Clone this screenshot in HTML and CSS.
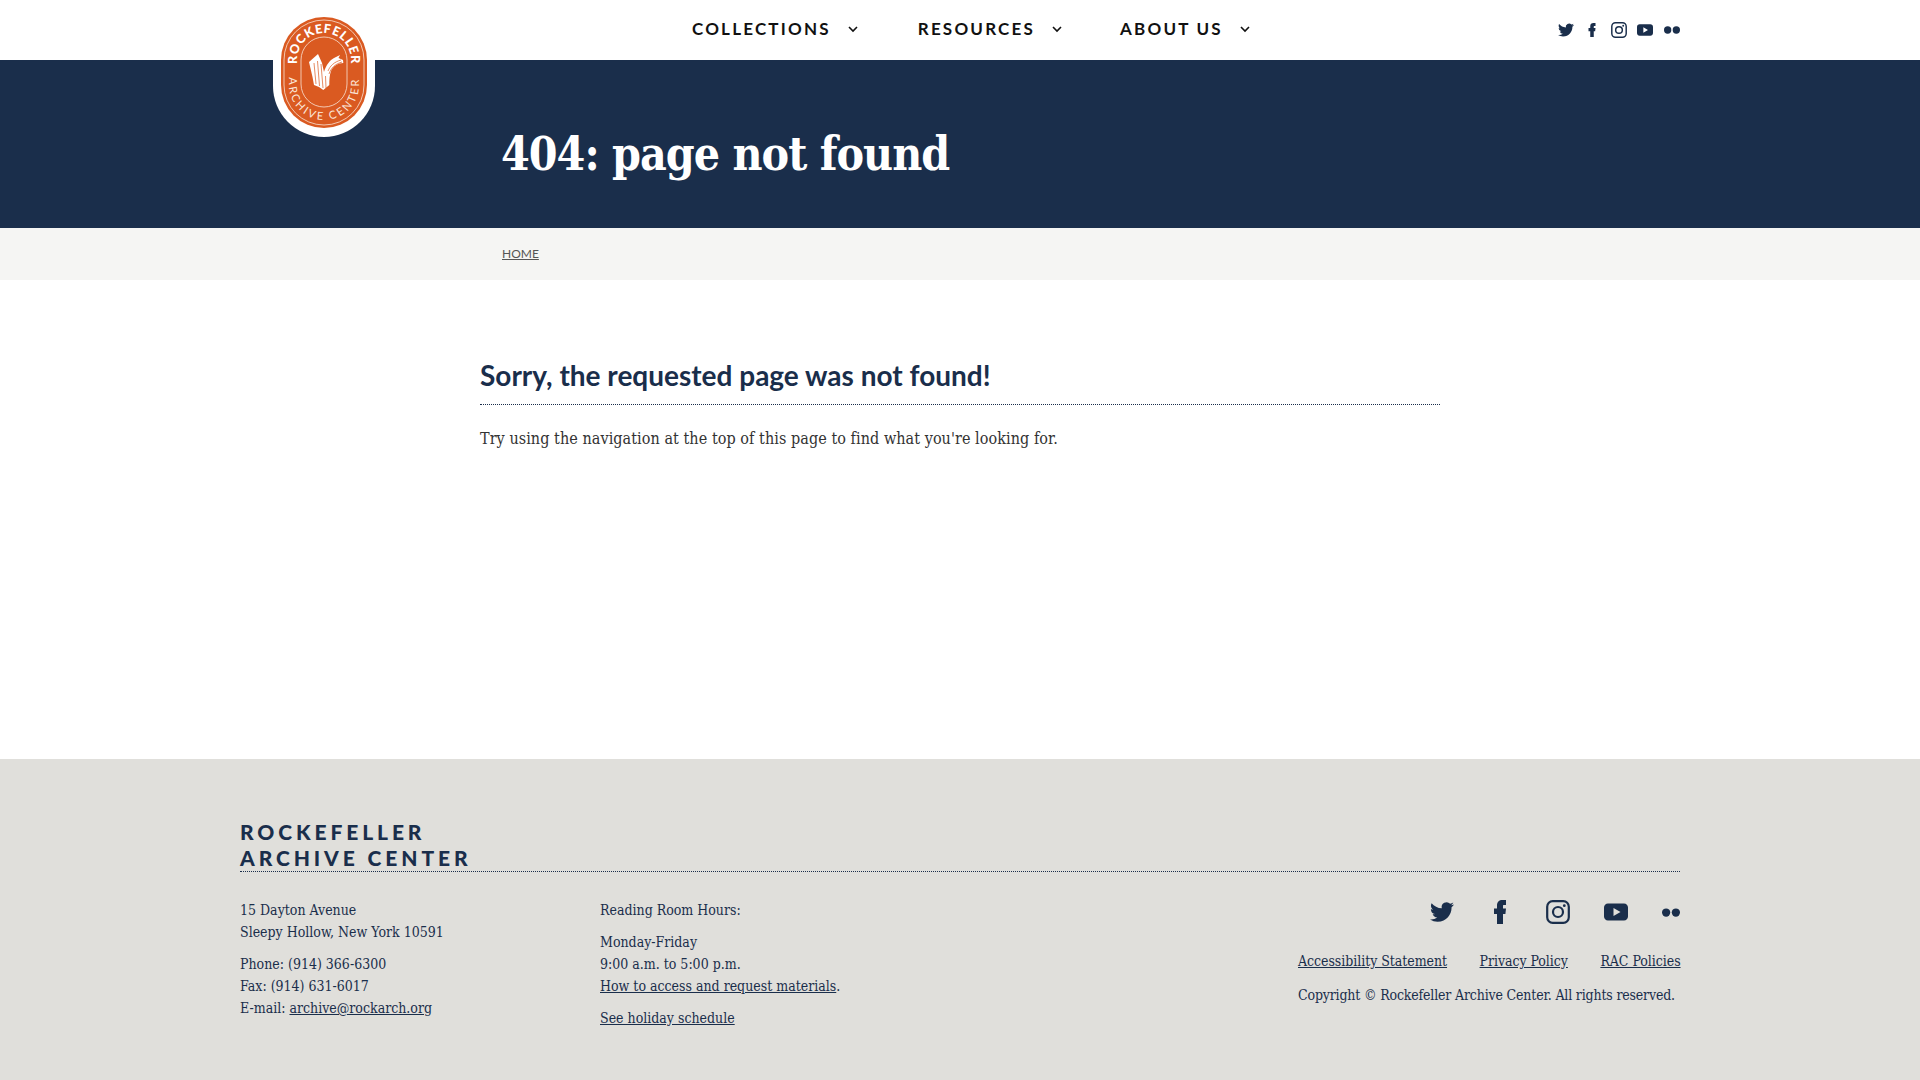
FILE: index.html
```html
<!DOCTYPE html>
<html lang="en">
  <head>
    <meta charset="UTF-8" />
    <meta name="viewport" content="width=device-width, initial-scale=1.0" />
    <title>404: page not found - Rockefeller Archive Center</title>
    <link rel="stylesheet" href="styles.css">
  </head>

  <body>
    <svg class="sprite" aria-hidden="true">
      <symbol id="i-twitter" viewBox="0 0 24 24">
        <path d="M23.953 4.57a10 10 0 01-2.825.775 4.958 4.958 0 002.163-2.723c-.951.555-2.005.959-3.127 1.184a4.92 4.92 0 00-8.384 4.482C7.69 8.095 4.067 6.13 1.64 3.162a4.822 4.822 0 00-.666 2.475c0 1.71.87 3.213 2.188 4.096a4.904 4.904 0 01-2.228-.616v.06a4.923 4.923 0 003.946 4.827 4.996 4.996 0 01-2.212.085 4.936 4.936 0 004.604 3.417 9.867 9.867 0 01-6.102 2.105c-.39 0-.779-.023-1.17-.067a13.995 13.995 0 007.557 2.209c9.053 0 13.998-7.496 13.998-13.985 0-.21 0-.42-.015-.63A9.935 9.935 0 0024 4.59z"/>
      </symbol>
      <symbol id="i-facebook" viewBox="0 0 24 24">
        <path d="M9 24V14H6V8.5H9V5.5C9 2 11 0 14.5 0H18V5H15.8C15 5 15 5.5 15 6.5V8.5H18L17.4 14H15V24Z"/>
      </symbol>
      <symbol id="i-instagram" viewBox="0 0 24 24">
        <rect x="1.2" y="1.2" width="21.6" height="21.6" rx="5.5" fill="none" stroke="currentColor" stroke-width="2.2"/>
        <circle cx="12" cy="12" r="5" fill="none" stroke="currentColor" stroke-width="2.2"/>
        <circle cx="18.3" cy="5.7" r="1.4"/>
      </symbol>
      <symbol id="i-youtube" viewBox="0 0 24 18">
        <path fill-rule="evenodd" d="M4 .5h16c2.3 0 4 1.7 4 4v9c0 2.3-1.7 4-4 4H4c-2.3 0-4-1.7-4-4v-9c0-2.3 1.7-4 4-4zM9.5 5v8l7-4z"/>
      </symbol>
      <symbol id="i-flickr" viewBox="0 0 24 11">
        <circle cx="5.5" cy="5.5" r="5.5"/>
        <circle cx="18.5" cy="5.5" r="5.5"/>
      </symbol>
    </svg>

    <header class="site-header">
      <div class="container header-inner">
        <a class="logo" href="#" aria-label="Rockefeller Archive Center">
          <svg viewBox="0 0 86 111" width="86" height="111">
            <defs>
              <path id="arc-top" d="M16 70V43A27 27 0 0 1 70 43V70"/>
              <path id="arc-bottom" d="M8 50V68A35 35 0 0 0 78 68V50"/>
            </defs>
            <rect width="86" height="111" rx="43" fill="#da5a21"/>
            <rect x="3" y="3" width="80" height="105" rx="40" fill="none" stroke="#f9e3d6" stroke-width="0.8"/>
            <rect x="20" y="20" width="46" height="70" rx="23" fill="none" stroke="#f9e3d6" stroke-width="0.8"/>
            <text class="logo-top"><textPath href="#arc-top" startOffset="50%" text-anchor="middle">ROCKEFELLER</textPath></text>
            <text class="logo-bottom"><textPath href="#arc-bottom" startOffset="50%" text-anchor="middle">ARCHIVE CENTER</textPath></text>
            <path d="M28 45L37 37L41 46L43 55C45 48 49 43 53 41L59 38L57.5 41L62 43L62.3 46C57 46 52 49 50 54C48.5 58 48.3 63 48.3 68L42.3 73L38 70L33 68L31.5 60Z" fill="#fff"/>
            <path d="M33 46L35 67M36.5 44L38.5 69M40 47L42 71M44.5 59L45 71M47 54C49 49 53 45 60 43M48 57C50 51 54 47 61 45" stroke="#da5a21" stroke-width="0.7" fill="none"/>
          </svg>
        </a>

        <nav class="main-nav">
          <a class="nav-item" href="#">COLLECTIONS<svg class="chev" viewBox="0 0 10 7"><path d="M1 1l4 4 4-4"/></svg></a>
          <a class="nav-item" href="#">RESOURCES<svg class="chev" viewBox="0 0 10 7"><path d="M1 1l4 4 4-4"/></svg></a>
          <a class="nav-item" href="#">ABOUT US<svg class="chev" viewBox="0 0 10 7"><path d="M1 1l4 4 4-4"/></svg></a>
        </nav>

        <div class="social social-small">
          <svg class="ic-tw"><use href="#i-twitter"/></svg>
          <svg class="ic-fb"><use href="#i-facebook"/></svg>
          <svg class="ic-ig"><use href="#i-instagram"/></svg>
          <svg class="ic-yt"><use href="#i-youtube"/></svg>
          <svg class="ic-fl"><use href="#i-flickr"/></svg>
        </div>
      </div>
    </header>

    <section class="hero">
      <h1>404: page not found</h1>
    </section>

    <div class="breadcrumb">
      <a href="#">HOME</a>
    </div>

    <main class="content">
      <h2>Sorry, the requested page was not found!</h2>
      <p>Try using the navigation at the top of this page to find what you're looking for.</p>
    </main>

    <footer class="site-footer">
      <div class="container">
        <div class="footer-title">ROCKEFELLER<br />ARCHIVE CENTER</div>
        <div class="footer-cols">
          <div class="col-address">
            <p>15 Dayton Avenue<br />Sleepy Hollow, New York 10591</p>
            <p>Phone: (914) 366-6300<br />Fax: (914) 631-6017<br />E-mail: <a href="#">archive@rockarch.org</a></p>
          </div>
          <div class="col-hours">
            <p>Reading Room Hours:</p>
            <p>Monday-Friday<br />9:00 a.m. to 5:00 p.m.<br /><a href="#">How to access and request materials</a>.</p>
            <p><a href="#">See holiday schedule</a></p>
          </div>
          <div class="col-right">
            <div class="social social-large">
              <svg class="ic-tw"><use href="#i-twitter"/></svg>
              <svg class="ic-fb"><use href="#i-facebook"/></svg>
              <svg class="ic-ig"><use href="#i-instagram"/></svg>
              <svg class="ic-yt"><use href="#i-youtube"/></svg>
              <svg class="ic-fl"><use href="#i-flickr"/></svg>
            </div>
            <div class="legal-links">
              <a href="#">Accessibility Statement</a>
              <a href="#">Privacy Policy</a>
              <a href="#">RAC Policies</a>
            </div>
            <p class="copyright">Copyright © Rockefeller Archive Center. All rights reserved.</p>
          </div>
        </div>
      </div>
    </footer>
  </body>
</html>
```

FILE: styles.css
```css
* {
  box-sizing: border-box;
}

body {
  margin: 0;
  font-family: "DejaVu Serif Condensed", "DejaVu Serif", serif;
  color: #333;
  background-color: #fff;
  overflow-x: hidden;
}

a {
  color: inherit;
}

p {
  margin: 0;
}

.sprite {
  display: none;
}

.container {
  width: 1440px;
  margin: 0 auto;
}

/* header */
.site-header {
  height: 60px;
  background-color: #fff;
}

.header-inner {
  position: relative;
  display: flex;
  align-items: center;
  height: 60px;
}

.logo {
  position: absolute;
  left: 33px;
  top: 0;
  z-index: 2;
  width: 102px;
  height: 137px;
  padding: 17px 8px 0;
  background-color: #fff;
  border-radius: 0 0 51px 51px;
}

.logo svg {
  display: block;
}

.logo-top {
  font-family: "Lato", sans-serif;
  font-weight: 900;
  font-size: 12.5px;
  letter-spacing: 0.7px;
  fill: #fff;
}

.logo-bottom {
  font-family: "Lato", sans-serif;
  font-weight: 400;
  font-size: 11px;
  letter-spacing: 2.4px;
  fill: #fbe6da;
}

.main-nav {
  display: flex;
  gap: 58px;
  margin-left: 452px;
  padding-bottom: 3px;
}

.nav-item {
  display: flex;
  align-items: center;
  font-family: "Lato", sans-serif;
  font-weight: 700;
  font-size: 17px;
  letter-spacing: 2.2px;
  color: #111;
  text-decoration: none;
}

.nav-item:first-child {
  margin-right: 2px;
}

.chev {
  width: 10px;
  height: 7px;
  margin-left: 17px;
  margin-top: 2px;
  fill: none;
  stroke: #111;
  stroke-width: 1.6;
}

.social {
  display: flex;
  align-items: center;
  color: #1a2e4b;
  fill: currentColor;
}

.social-small {
  margin-left: auto;
  gap: 11px;
}

.social-small .ic-tw { width: 16px; height: 16px; }
.social-small .ic-fb { width: 14px; height: 16px; }
.social-small .ic-ig { width: 16px; height: 16px; margin: 0 -1px 0 1px; }
.social-small .ic-yt { width: 16px; height: 12px; }
.social-small .ic-fl { width: 16px; height: 8px; }

/* banner */
.hero {
  height: 168px;
  padding: 64px 0 0 501px;
  background-color: #1a2e4b;
}

h1 {
  margin: 0;
  font-weight: 700;
  font-size: 46px;
  line-height: 60px;
  letter-spacing: -1px;
  color: #fff;
}

.breadcrumb {
  height: 52px;
  padding-left: 502px;
  background-color: #f5f5f3;
  font-family: "Lato", sans-serif;
  font-size: 12px;
  line-height: 52px;
  color: #555;
}

/* page body */
.content {
  width: 960px;
  height: 479px;
  margin: 0 auto;
  padding-top: 77px;
}

h2 {
  margin: 0 0 22px;
  padding-bottom: 10px;
  border-bottom: 1px dotted #1a2e4b;
  font-family: "Lato", sans-serif;
  font-weight: 700;
  font-size: 28px;
  line-height: 37px;
  color: #1a2e4b;
}

.content p {
  font-size: 16px;
  line-height: 24px;
  letter-spacing: 0.06px;
}

/* footer */
.site-footer {
  height: 321px;
  padding-top: 60px;
  background-color: #e0dfdb;
  color: #1a2e4b;
  font-size: 14px;
  line-height: 22px;
}

.footer-title {
  border-bottom: 1px dotted #1a2e4b;
  font-family: "Lato", sans-serif;
  font-weight: 900;
  font-size: 21px;
  line-height: 26px;
  letter-spacing: 3.9px;
}

.footer-cols {
  display: flex;
  padding-top: 27px;
}

.col-address {
  width: 360px;
}

.col-address p,
.col-hours p {
  margin-bottom: 10px;
}

.col-right {
  width: 382px;
  margin-left: auto;
}

.social-large {
  justify-content: flex-end;
  gap: 34px;
  height: 26px;
}

.social-large .ic-tw { width: 24px; height: 24px; }
.social-large .ic-fb { width: 24px; height: 24px; }
.social-large .ic-ig { width: 24px; height: 24px; }
.social-large .ic-yt { width: 24px; height: 18px; }
.social-large .ic-fl { width: 18px; height: 9px; }

.legal-links {
  display: flex;
  gap: 32.5px;
  margin-top: 25px;
  letter-spacing: -0.05px;
  white-space: nowrap;
}

.copyright {
  margin-top: 12px;
  letter-spacing: -0.17px;
  white-space: nowrap;
}
```
